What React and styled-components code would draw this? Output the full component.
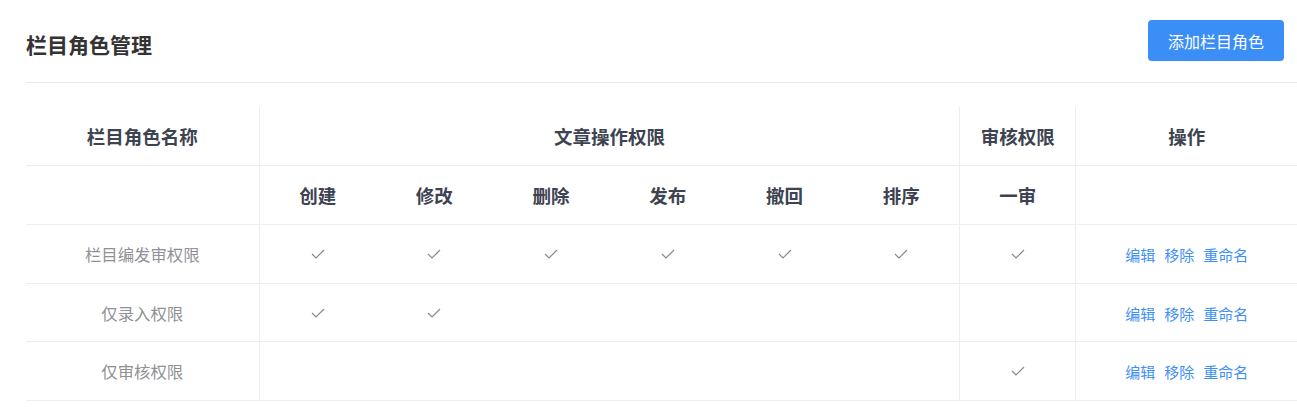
import React from 'react';
import styled, { createGlobalStyle } from 'styled-components';

const GlobalStyle = createGlobalStyle`
  body {
    margin: 0;
    background: #fff;
    font-family: "PingFang SC", "Noto Sans CJK SC", "Noto Sans", sans-serif;
  }
`;

const Page = styled.div`
  padding-left: 26px;
  box-sizing: border-box;
  width: 1297px;
`;

const Header = styled.div`
  height: 83px;
  display: flex;
  align-items: center;
  justify-content: space-between;
  border-bottom: 1px solid #e8e8e8;
  box-sizing: border-box;
`;

const Title = styled.h2`
  margin: 6px 0 0;
  font-size: 21px;
  font-weight: 700;
  color: #333;
`;

const AddButton = styled.button`
  margin: 0 13px 1px 0;
  height: 41px;
  width: 136px;
  border: none;
  border-radius: 4px;
  background: #3a8ef6;
  color: #fff;
  font-size: 16px;
  font-family: inherit;
  cursor: pointer;
`;

const Table = styled.table`
  margin-top: 24px;
  width: 100%;
  border-collapse: collapse;
  table-layout: fixed;
`;

const Th = styled.th`
  height: 58.1px;
  padding: 0;
  font-size: 18.5px;
  font-weight: 700;
  color: #3d4350;
  text-align: center;
  border-bottom: 1px solid #ebeef5;
  border-right: ${p => (p.$divider ? '1px solid #ebeef5' : 'none')};
`;

const Td = styled.td`
  height: 57.6px;
  padding: 0;
  font-size: 16.4px;
  color: #8f9196;
  text-align: center;
  border-bottom: 1px solid #ebeef5;
  border-right: ${p => (p.$divider ? '1px solid #ebeef5' : 'none')};
`;

const Link = styled.a`
  color: #3e8ef7;
  font-size: 15px;
  cursor: pointer;
  & + & {
    margin-left: 9px;
  }
`;

const Check = () => (
  <svg width="14" height="10" viewBox="0 0 14 10" style={{ display: 'block', margin: '0 auto' }}>
    <polyline points="1,5 5,9 13,1" fill="none" stroke="#8a8a8a" strokeWidth="1.2" />
  </svg>
);

const perms = ['创建', '修改', '删除', '发布', '撤回', '排序'];

const roles = [
  { name: '栏目编发审权限', perms: [1, 1, 1, 1, 1, 1], review: true },
  { name: '仅录入权限', perms: [1, 1, 0, 0, 0, 0], review: false },
  { name: '仅审核权限', perms: [0, 0, 0, 0, 0, 0], review: true },
];

const App = () => (
  <Page>
    <GlobalStyle />
    <Header>
      <Title>栏目角色管理</Title>
      <AddButton>添加栏目角色</AddButton>
    </Header>
    <Table>
      <colgroup>
        <col style={{ width: 233 }} />
        {perms.map(p => <col key={p} style={{ width: 116.8 }} />)}
        <col style={{ width: 116 }} />
        <col style={{ width: 221 }} />
      </colgroup>
      <thead>
        <tr>
          <Th $divider>栏目角色名称</Th>
          <Th $divider colSpan={6}>文章操作权限</Th>
          <Th $divider>审核权限</Th>
          <Th>操作</Th>
        </tr>
        <tr>
          <Th $divider />
          {perms.map((p, i) => (
            <Th key={p} $divider={i === perms.length - 1}>{p}</Th>
          ))}
          <Th $divider>一审</Th>
          <Th />
        </tr>
      </thead>
      <tbody>
        {roles.map(r => (
          <tr key={r.name}>
            <Td $divider>{r.name}</Td>
            {r.perms.map((v, i) => (
              <Td key={i} $divider={i === r.perms.length - 1}>{v ? <Check /> : null}</Td>
            ))}
            <Td $divider>{r.review ? <Check /> : null}</Td>
            <Td>
              <Link>编辑</Link>
              <Link>移除</Link>
              <Link>重命名</Link>
            </Td>
          </tr>
        ))}
      </tbody>
    </Table>
  </Page>
);

export default App;
